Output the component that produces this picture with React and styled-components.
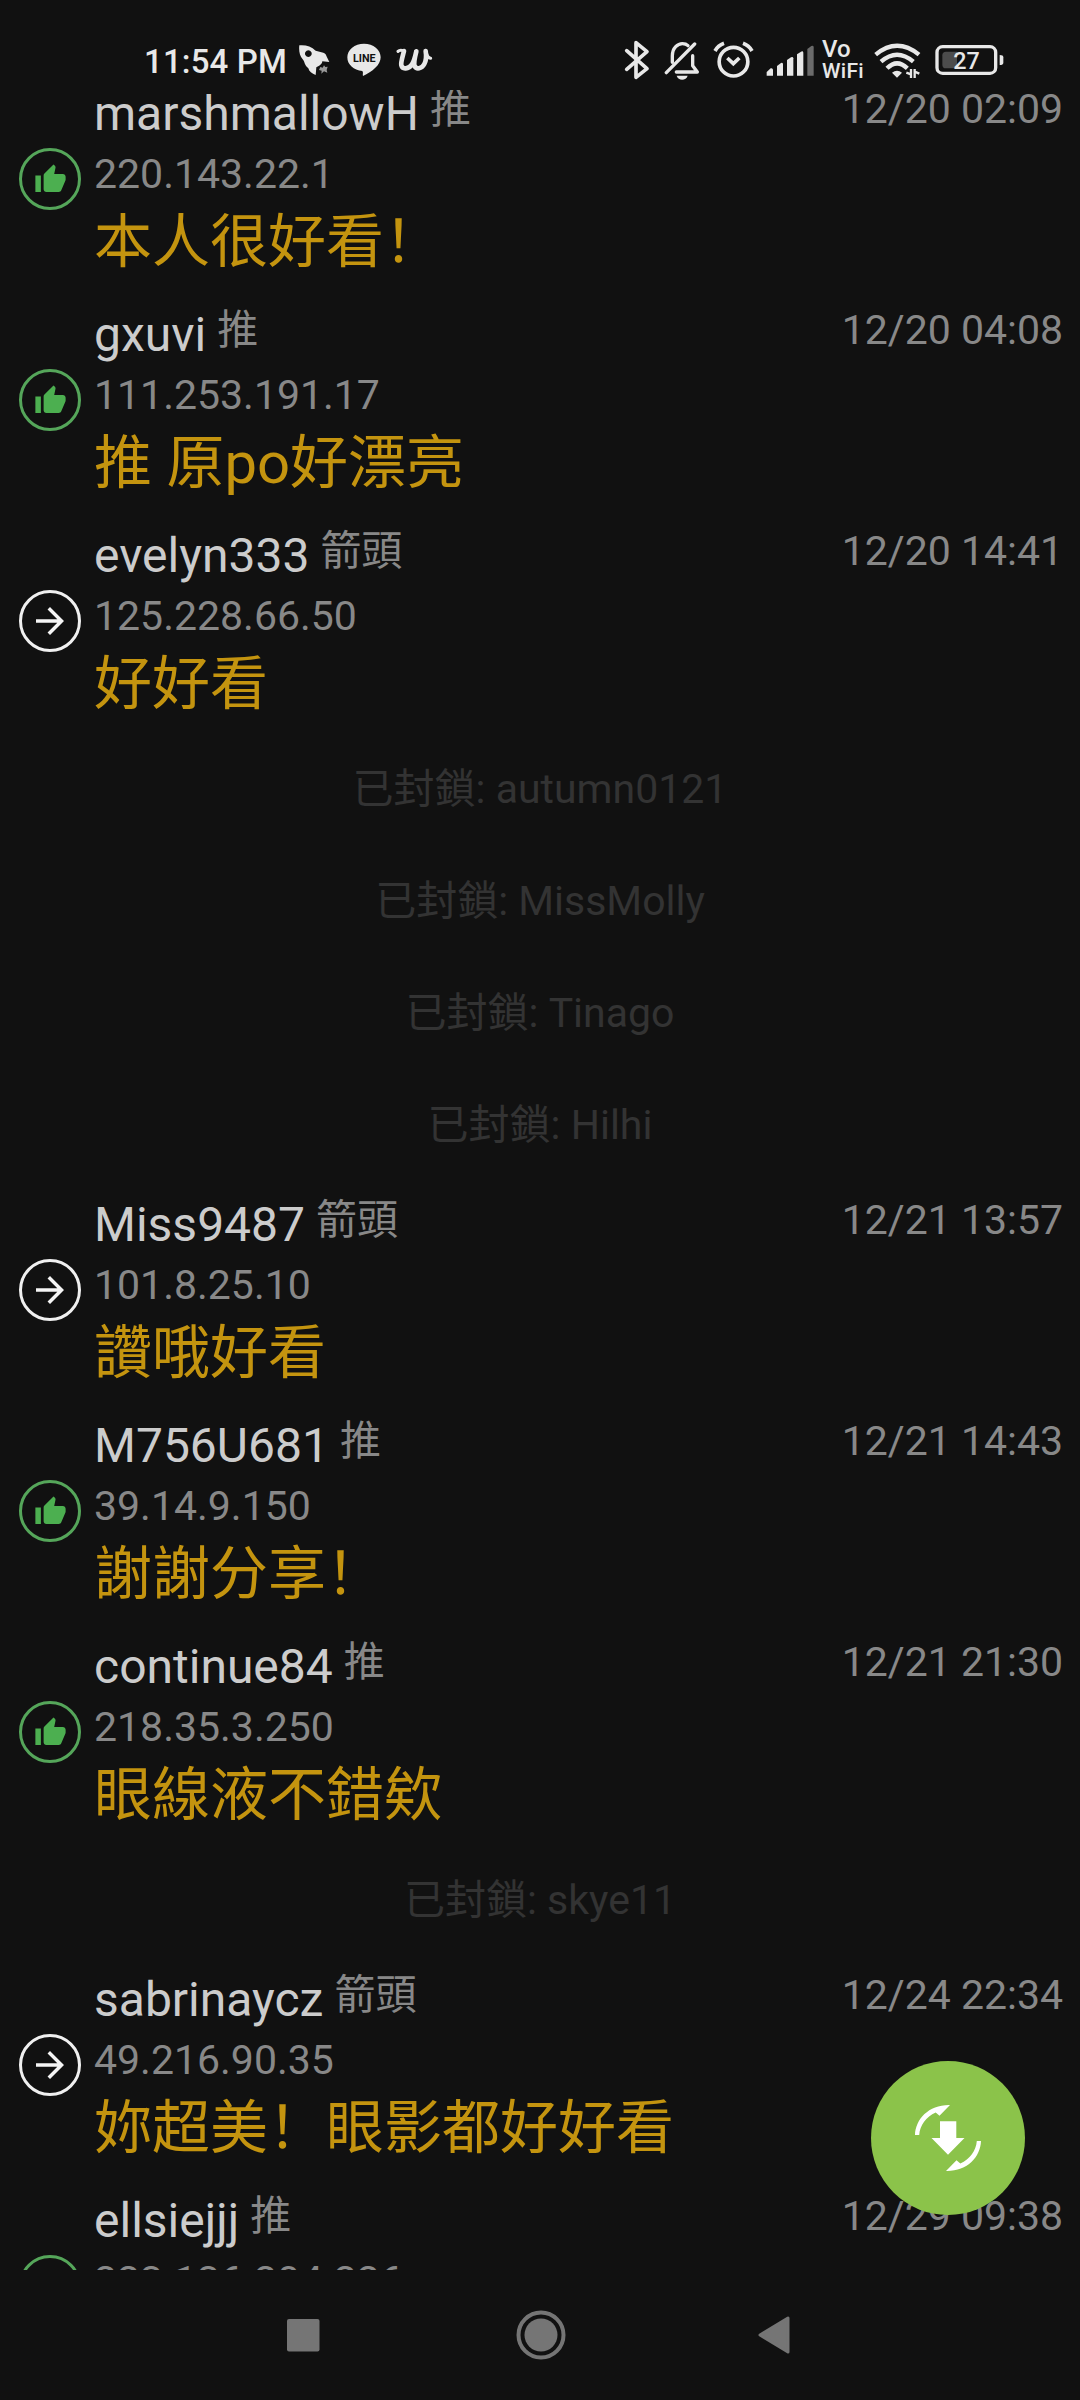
import React from 'react';
import styled, { createGlobalStyle } from 'styled-components';
import { MdThumbUp, MdArrowForward } from 'react-icons/md';

// Styles
//------------------------------------------------------------------------------------------------

const GlobalStyle = createGlobalStyle`
  * {
    box-sizing: border-box;
  }
  body {
    margin: 0;
    background-color: #111111;
    font-family: Roboto, 'Noto Sans CJK SC', sans-serif;
  }
`;

const Screen = styled.div`
  position: relative;
  display: flex;
  flex-direction: column;
  width: 1080px;
  height: 2400px;
  overflow: hidden;
  background-color: #111111;
`;

const StatusBar = styled.header`
  display: flex;
  justify-content: space-between;
  flex: none;
  height: 90px;
  padding: 40px 76px 0 144px;
  color: #e8e8e8;
`;

const StatusGroup = styled.div`
  display: flex;
  height: 40px;
`;

const Clock = styled.span`
  width: 155px;
  font-size: 33px;
  font-weight: 500;
  line-height: 43px;
  letter-spacing: 0.15px;
  white-space: nowrap;
`;

const StatusIcon = styled.svg`
  flex: none;
  display: block;
  height: 40px;
  width: ${(props) => props.$w}px;
  margin-left: ${(props) => props.$gap || 0}px;
`;

const VoWifi = styled.div`
  display: flex;
  flex-direction: column;
  width: 43px;
  margin-left: 8px;
  font-weight: 500;
  white-space: nowrap;
`;

const Vo = styled.span`
  font-size: 24px;
  line-height: 18px;
`;

const WifiLabel = styled.span`
  font-size: 21px;
  line-height: 27px;
  letter-spacing: 0.3px;
`;

const CommentList = styled.main`
  flex: 1;
  min-height: 0;
  overflow: hidden;
`;

const Scrolled = styled.div`
  margin-top: -20px;
`;

const CommentRow = styled.article`
  display: flex;
  height: 221px;
  padding: 14px 17px 0 19px;
`;

const Badge = styled.div`
  display: flex;
  align-items: center;
  justify-content: center;
  flex: none;
  width: 62px;
  height: 62px;
  margin: 64px 13px 0 0;
  border-radius: 50%;
  border: 3px solid ${(props) => (props.$push ? '#55a65a' : '#f0f0f0')};
  color: ${(props) => (props.$push ? '#4caf50' : '#f5f5f5')};
`;

const CommentBody = styled.div`
  flex: 1;
`;

const TitleLine = styled.div`
  display: flex;
  height: 60px;
  line-height: 60px;
`;

const UserName = styled.span`
  font-size: 48px;
  color: #cccccc;
`;

const Tag = styled.span`
  margin: -5px 0 0 11px;
  font-size: 41px;
  color: #888888;
`;

const PostedAt = styled.time`
  margin: -5px 0 0 auto;
  font-size: 41px;
  color: #888888;
`;

const Ip = styled.div`
  font-size: 41px;
  line-height: 60px;
  color: #888888;
`;

const Message = styled.p`
  margin: 0;
  font-size: 58px;
  line-height: 76px;
  color: #c4940f;
`;

const BlockedRow = styled.div`
  height: 112px;
  line-height: 112px;
  text-align: center;
  font-size: 41px;
  color: #333333;
`;

const RefreshButton = styled.button`
  position: absolute;
  right: 55px;
  bottom: 185px;
  display: flex;
  align-items: center;
  justify-content: center;
  width: 154px;
  height: 154px;
  padding: 0;
  border: none;
  border-radius: 50%;
  background-color: #8bc34a;
`;

const NavBar = styled.nav`
  display: flex;
  align-items: center;
  justify-content: space-between;
  flex: none;
  height: 130px;
  padding: 0 290px 0 287px;
`;

// Data
//------------------------------------------------------------------------------------------------

const comments = [
  { user: 'marshmallowH', tag: '推', ip: '220.143.22.1', date: '12/20 02:09', text: '本人很好看！' },
  { user: 'gxuvi', tag: '推', ip: '111.253.191.17', date: '12/20 04:08', text: '推 原po好漂亮' },
  { user: 'evelyn333', tag: '箭頭', ip: '125.228.66.50', date: '12/20 14:41', text: '好好看' },
  { blocked: 'autumn0121' },
  { blocked: 'MissMolly' },
  { blocked: 'Tinago' },
  { blocked: 'Hilhi' },
  { user: 'Miss9487', tag: '箭頭', ip: '101.8.25.10', date: '12/21 13:57', text: '讚哦好看' },
  { user: 'M756U681', tag: '推', ip: '39.14.9.150', date: '12/21 14:43', text: '謝謝分享！' },
  { user: 'continue84', tag: '推', ip: '218.35.3.250', date: '12/21 21:30', text: '眼線液不錯欸' },
  { blocked: 'skye11' },
  { user: 'sabrinaycz', tag: '箭頭', ip: '49.216.90.35', date: '12/24 22:34', text: '妳超美！眼影都好好看' },
  { user: 'ellsiejjj', tag: '推', ip: '223.136.204.226', date: '12/29 09:38', text: '' },
];

// Icons
//------------------------------------------------------------------------------------------------

const RocketIcon = () => (
  <StatusIcon $w={31} viewBox="537 60 93 120">
    <path
      fill="currentColor"
      fillRule="evenodd"
      d="M538 76C556 74 574 79 587 92L610 98C617 100 619 106 621 112L628 126L607 124C606 134 596 139 589 142L587 165C576 161 567 155 565 145C553 136 555 126 548 118C539 107 536 92 538 76ZM565 91a10 10 0 1 0 .1 0Z"
    />
    <path fill="#9a9a9a" d="M601 141L608 143L612 136L616 141L623 140L620 150L622 158L612 154L604 161L605 152L597 150Z" />
  </StatusIcon>
);

const LineIcon = () => (
  <StatusIcon $w={34} $gap={17} viewBox="681 60 102 120">
    <path fill="currentColor" d="M732 71C760 71 782 89 782 112C782 135 757 155 729 168C727 163 731 158 727 153C701 151 682 134 682 112C682 89 704 71 732 71Z" />
    <text x="699" y="127" fontFamily="Roboto" fontWeight="700" fontSize="35" textLength="68" lengthAdjust="spacingAndGlyphs" fill="#111111">
      LINE
    </text>
  </StatusIcon>
);

const WattpadIcon = () => (
  <StatusIcon $w={37} $gap={15} viewBox="828 60 111 120">
    <g fill="none" stroke="currentColor" strokeLinecap="round" strokeLinejoin="round">
      <path strokeWidth="14" d="M852 93C848 110 842 126 844 136C847 149 866 148 876 133C883 122 886 107 889 94C885 110 880 128 884 138C889 149 905 147 913 132C919 121 919 106 917 93" />
      <path strokeWidth="9" d="M834 94C838 90 844 90 850 92M919 98C921 107 926 114 932 115" />
    </g>
  </StatusIcon>
);

const BluetoothIcon = () => (
  <StatusIcon $w={26} viewBox="70 60 78 120">
    <path fill="none" stroke="currentColor" strokeWidth="11" strokeLinejoin="round" strokeLinecap="round" d="M78 92L139 146L106 172V68L139 95L78 148" />
  </StatusIcon>
);

const BellOffIcon = () => (
  <StatusIcon $w={36} $gap={14} viewBox="190 60 108 120">
    <g fill="none" stroke="currentColor" strokeWidth="10" strokeLinecap="round">
      <path d="M197 158L282 72" />
      <path d="M215 127V108C215 83 232 71 245 71C252 71 258 73 262 77" />
      <path strokeLinejoin="round" d="M227 156H290L276 137V107" />
    </g>
    <path fill="currentColor" d="M228 167H261C257 183 232 183 228 167Z" />
  </StatusIcon>
);

const AlarmIcon = () => (
  <StatusIcon $w={41} $gap={12.5} viewBox="336 60 123 120">
    <g fill="none" stroke="currentColor" strokeWidth="11">
      <circle cx="397.500" cy="125" r="43" />
      <path d="M379 114L397 131L415 114" />
      <path d="M342 93C348 82 358 74 369 70M453 93C447 82 437 74 426 70" />
    </g>
  </StatusIcon>
);

const SignalIcon = () => (
  <StatusIcon $w={48} $gap={12.5} viewBox="496 60 144 120">
    <g fill="currentColor">
      <path d="M498 167V156L510 145Q516 143 517 149V167Z" />
      <path d="M529 167V138L541 129Q546 127 547 132V167Z" />
      <path d="M559 167V120L571 112Q577 109 578 115V167Z" />
      <path d="M589 167V103L601 95Q607 92 608 98V167Z" />
      <path fill="#6b6b6b" d="M620 167V87L632 78Q638 75 639 81V167Z" />
    </g>
  </StatusIcon>
);

const WifiIcon = () => (
  <StatusIcon $w={47} $gap={9} viewBox="821 60 141 120">
    <g fill="none" stroke="currentColor" strokeWidth="13">
      <path d="M826 104Q890 51 956 104" />
      <path d="M842 125Q890 83 939 125" />
      <path d="M860 145Q890 115 921 145" />
    </g>
    <path fill="currentColor" d="M875 158Q890 146 905 158L890 173Z" />
    <path fill="none" stroke="currentColor" strokeWidth="7" d="M932 147V174M934 164L918 158M943 174V147M941 154L957 161" />
  </StatusIcon>
);

const BatteryIcon = () => (
  <StatusIcon $w={69} $gap={14} viewBox="1004 60 207 120">
    <rect x="1010" y="80" width="176" height="80" rx="17" fill="none" stroke="currentColor" strokeWidth="10" />
    <path fill="#4c4c4c" d="M1037 95H1070V145H1037Q1026 145 1026 134V106Q1026 95 1037 95Z" />
    <path fill="currentColor" d="M1198 105Q1209 105 1209 112V128Q1209 135 1198 135Z" />
    <text x="1098.500" y="147" textAnchor="middle" fontFamily="Roboto" fontWeight="500" fontSize="70" fill="currentColor">
      27
    </text>
  </StatusIcon>
);

const RefreshIcon = () => (
  <svg width="72" height="72" viewBox="0 0 72 72" fill="#ffffff">
    <path d="M28 19.300H44.300V36H52.500L36 52.700L19.500 36H28Z" />
    <path d="M3 33C3.500 17 17 2.500 38 3L27.500 13.700L23.700 10.500C14 15 8 23 7.200 33Z" />
    <path d="M69 39C68.500 55 55 69.500 34 69L44.500 58.300L48.300 61.500C58 57 64 49 64.800 39Z" />
  </svg>
);

// Components
//------------------------------------------------------------------------------------------------

const Comment = ({ user, tag, ip, date, text }) => {
  const push = tag === '推';

  return (
    <CommentRow>
      <Badge $push={push}>{push ? <MdThumbUp size={33} /> : <MdArrowForward size={42} />}</Badge>
      <CommentBody>
        <TitleLine>
          <UserName>{user}</UserName>
          <Tag>{tag}</Tag>
          <PostedAt>{date}</PostedAt>
        </TitleLine>
        <Ip>{ip}</Ip>
        <Message>{text}</Message>
      </CommentBody>
    </CommentRow>
  );
};

const App = () => {
  return (
    <Screen>
      <GlobalStyle />
      <StatusBar>
        <StatusGroup>
          <Clock>11:54 PM</Clock>
          <RocketIcon />
          <LineIcon />
          <WattpadIcon />
        </StatusGroup>
        <StatusGroup>
          <BluetoothIcon />
          <BellOffIcon />
          <AlarmIcon />
          <SignalIcon />
          <VoWifi>
            <Vo>Vo</Vo>
            <WifiLabel>WiFi</WifiLabel>
          </VoWifi>
          <WifiIcon />
          <BatteryIcon />
        </StatusGroup>
      </StatusBar>

      <CommentList>
        <Scrolled>
          {comments.map((item) =>
            item.blocked ? (
              <BlockedRow key={item.blocked}>已封鎖: {item.blocked}</BlockedRow>
            ) : (
              <Comment key={item.user} {...item} />
            )
          )}
        </Scrolled>
      </CommentList>

      <RefreshButton>
        <RefreshIcon />
      </RefreshButton>

      <NavBar>
        <svg width="36" height="33" viewBox="0 0 36 33">
          <rect width="32.500" height="32.500" rx="2" fill="#757575" />
        </svg>
        <svg width="50" height="50" viewBox="0 0 50 50">
          <circle cx="25" cy="25" r="22.500" fill="none" stroke="#757575" strokeWidth="4" />
          <circle cx="25" cy="25" r="16.500" fill="#757575" />
        </svg>
        <svg width="32" height="38" viewBox="0 0 32 38">
          <path d="M2 19L30 2V36Z" fill="#757575" stroke="#757575" strokeWidth="3" strokeLinejoin="round" />
        </svg>
      </NavBar>
    </Screen>
  );
};

export default App;
